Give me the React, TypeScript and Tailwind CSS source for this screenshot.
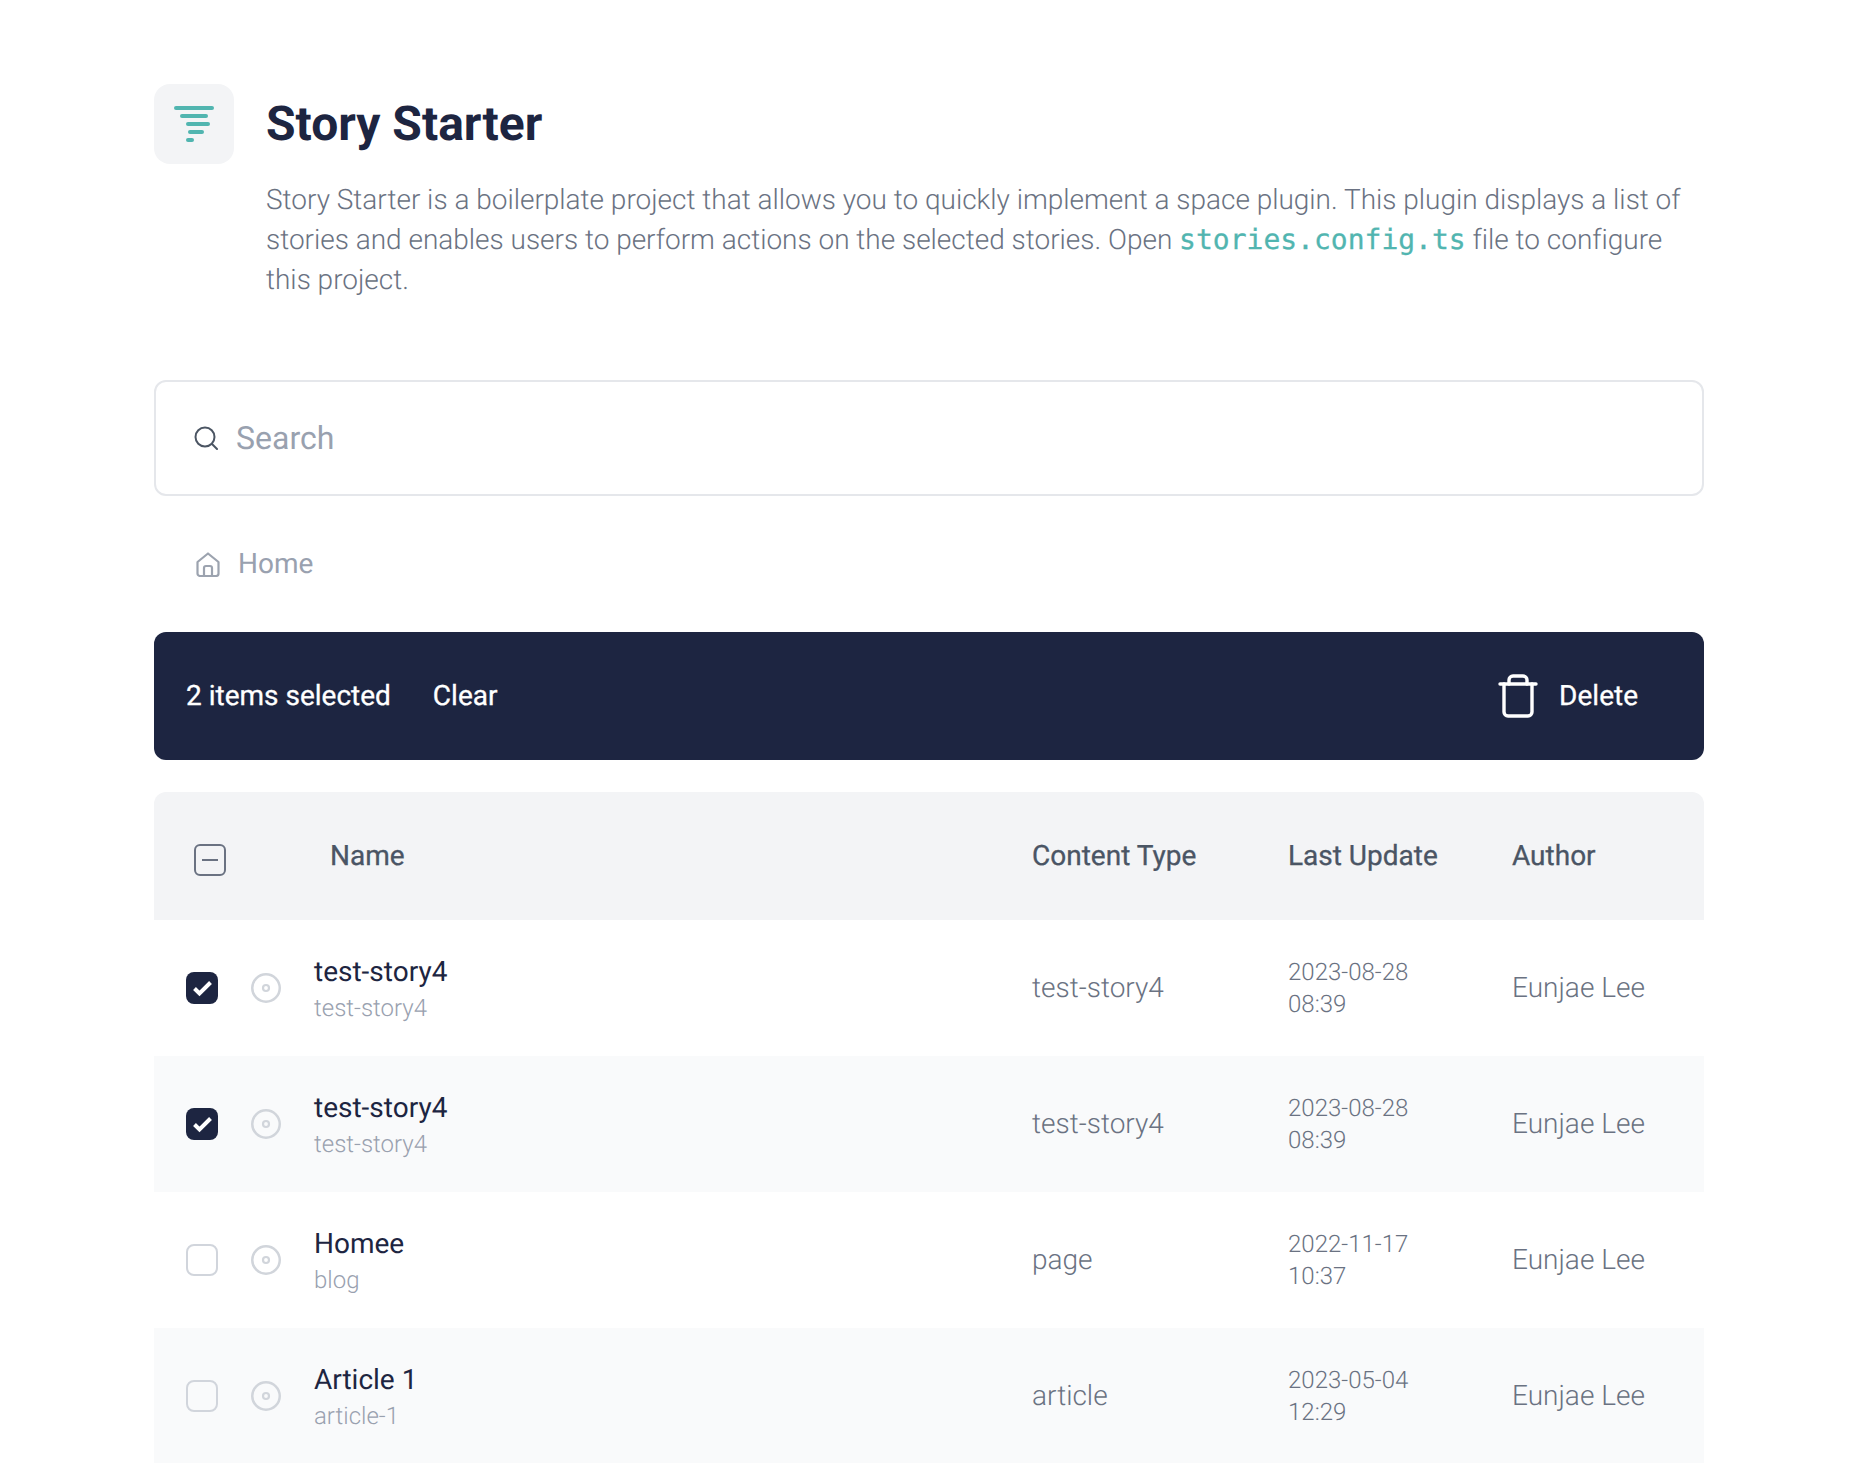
import React from "react";

const rows = [
	{ name: "test-story4", slug: "test-story4", type: "test-story4", date: "2023-08-28", time: "08:39", checked: true },
	{ name: "test-story4", slug: "test-story4", type: "test-story4", date: "2023-08-28", time: "08:39", checked: true },
	{ name: "Homee", slug: "blog", type: "page", date: "2022-11-17", time: "10:37", checked: false },
	{ name: "Article 1", slug: "article-1", type: "article", date: "2023-05-04", time: "12:29", checked: false },
];

const Logo = () => (
	<svg width="40" height="40" viewBox="0 0 40 40" fill="none" stroke="#51b5b0" strokeWidth="4" strokeLinecap="round">
		<path d="M2 4h36" />
		<path d="M8 12h24" />
		<path d="M14 20h20" />
		<path d="M16 28h12" />
		<path d="M14 36h4" />
	</svg>
);

const Dot = () => (
	<svg width="30" height="30" viewBox="0 0 30 30" fill="none" stroke="#d1d5db" className="shrink-0">
		<circle cx="15" cy="15" r="13.75" strokeWidth="2.5" />
		<circle cx="15" cy="15" r="3" strokeWidth="2.2" />
	</svg>
);

const Check = ({ on }: { on: boolean }) =>
	on ? (
		<div className="w-8 h-8 rounded-lg bg-[#1d2541] shrink-0">
			<svg width="32" height="32" viewBox="0 0 32 32" fill="none" stroke="#fff" strokeWidth="4">
				<path d="M8.5 16.5l5 5L24.5 10.5" />
			</svg>
		</div>
	) : (
		<div className="w-8 h-8 rounded-lg border-2 border-gray-300 shrink-0" />
	);

const App = () => {
	return (
		<div className="w-[1858px] h-[1463px] overflow-hidden bg-white px-[154px] pt-[84px] font-['Roboto',sans-serif] [text-rendering:geometricPrecision]">
			<div className="flex gap-8">
				<div className="w-20 h-20 rounded-2xl bg-gray-100 flex items-center justify-center shrink-0">
					<Logo />
				</div>
				<div>
					<h1 className="text-[48px] leading-[80px] font-bold text-[#1d2541]">Story Starter</h1>
					<p className="mt-4 text-[28px] leading-[40px] font-light tracking-[-0.015px] text-gray-500">
						Story Starter is a boilerplate project that allows you to quickly implement a space plugin. This plugin displays a list of stories and enables users to perform actions on the selected stories. Open{" "}
						<code className="font-['DejaVu_Sans_Mono',monospace] text-[28px] leading-[40px] font-normal tracking-normal text-[#51b5b0] [-webkit-text-stroke:0.3px_#51b5b0]">stories.config.ts</code> file to configure this project.
					</p>
				</div>
			</div>

			<div className="mt-20 h-[116px] border-2 border-gray-200 rounded-xl flex items-center pl-[38px] gap-[18px]">
				<svg width="24" height="24" viewBox="0 0 24 24" fill="none" stroke="#4b5563" strokeWidth="2" strokeLinecap="round">
					<circle cx="11" cy="11" r="9.5" />
					<path d="M18 18l5 5" />
				</svg>
				<span className="text-[32px] text-gray-400">Search</span>
			</div>

			<div className="mt-[47px] h-[42px] flex items-center pl-[42px] gap-[18px]">
				<svg width="24" height="25" viewBox="0 0 24 25" fill="none" stroke="#9ca3af" strokeWidth="2.2" strokeLinejoin="round">
					<path d="M1.5 10L12 1.5 22.5 10v11.5a2.5 2.5 0 0 1-2.5 2.5H4a2.5 2.5 0 0 1-2.5-2.5z" />
					<path d="M8 24v-8a2 2 0 0 1 2-2h4a2 2 0 0 1 2 2v8" />
				</svg>
				<span className="text-[28px] text-gray-400">Home</span>
			</div>

			<div className="mt-[47px] h-32 rounded-xl bg-[#1d2541] flex items-center pl-8 pr-[66px] text-white text-[28px] [-webkit-text-stroke:0.3px_#fff]">
				<span>2 items selected</span>
				<span className="ml-[42px]">Clear</span>
				<svg className="ml-auto" width="40" height="44" viewBox="0 0 40 44" fill="none" stroke="#fff" strokeWidth="3.4" strokeLinecap="round" strokeLinejoin="round">
					<path d="M2 10h36" />
					<path d="M6 10v28a4 4 0 0 0 4 4h20a4 4 0 0 0 4-4V10" />
					<path d="M11 10V6a4 4 0 0 1 4-4h10a4 4 0 0 1 4 4v4" />
				</svg>
				<span className="ml-[21px]">Delete</span>
			</div>

			<div className="mt-8 h-32 rounded-t-xl bg-gray-100 grid grid-cols-[176px_702px_256px_224px_1fr] items-center text-[28px] text-gray-600 [-webkit-text-stroke:0.3px_#4b5563]">
				<div className="pl-10 pt-2">
					<div className="w-8 h-8 rounded-md border-2 border-gray-500 flex items-center justify-center">
						<div className="w-4 h-0.5 bg-gray-500" />
					</div>
				</div>
				<div>Name</div>
				<div>Content Type</div>
				<div>Last Update</div>
				<div>Author</div>
			</div>

			{rows.map((row, i) => (
				<div key={i} className={`h-[136px] grid grid-cols-[160px_718px_256px_224px_1fr] items-center ${i % 2 === 1 ? "bg-gray-50" : "bg-white"}`}>
					<div className="pl-8 flex items-center gap-[33px]">
						<Check on={row.checked} />
						<Dot />
					</div>
					<div className="pt-1">
						<div className="text-[28px] leading-[36px] text-[#1d2541]">{row.name}</div>
						<div className="text-[24px] leading-[36px] font-light text-gray-400">{row.slug}</div>
					</div>
					<div className="text-[28px] font-light text-gray-500">{row.type}</div>
					<div className="text-[24px] leading-[32px] font-light text-gray-500">
						{row.date}
						<br />
						{row.time}
					</div>
					<div className="text-[28px] font-light text-gray-500">Eunjae Lee</div>
				</div>
			))}
		</div>
	);
};

export default App;
